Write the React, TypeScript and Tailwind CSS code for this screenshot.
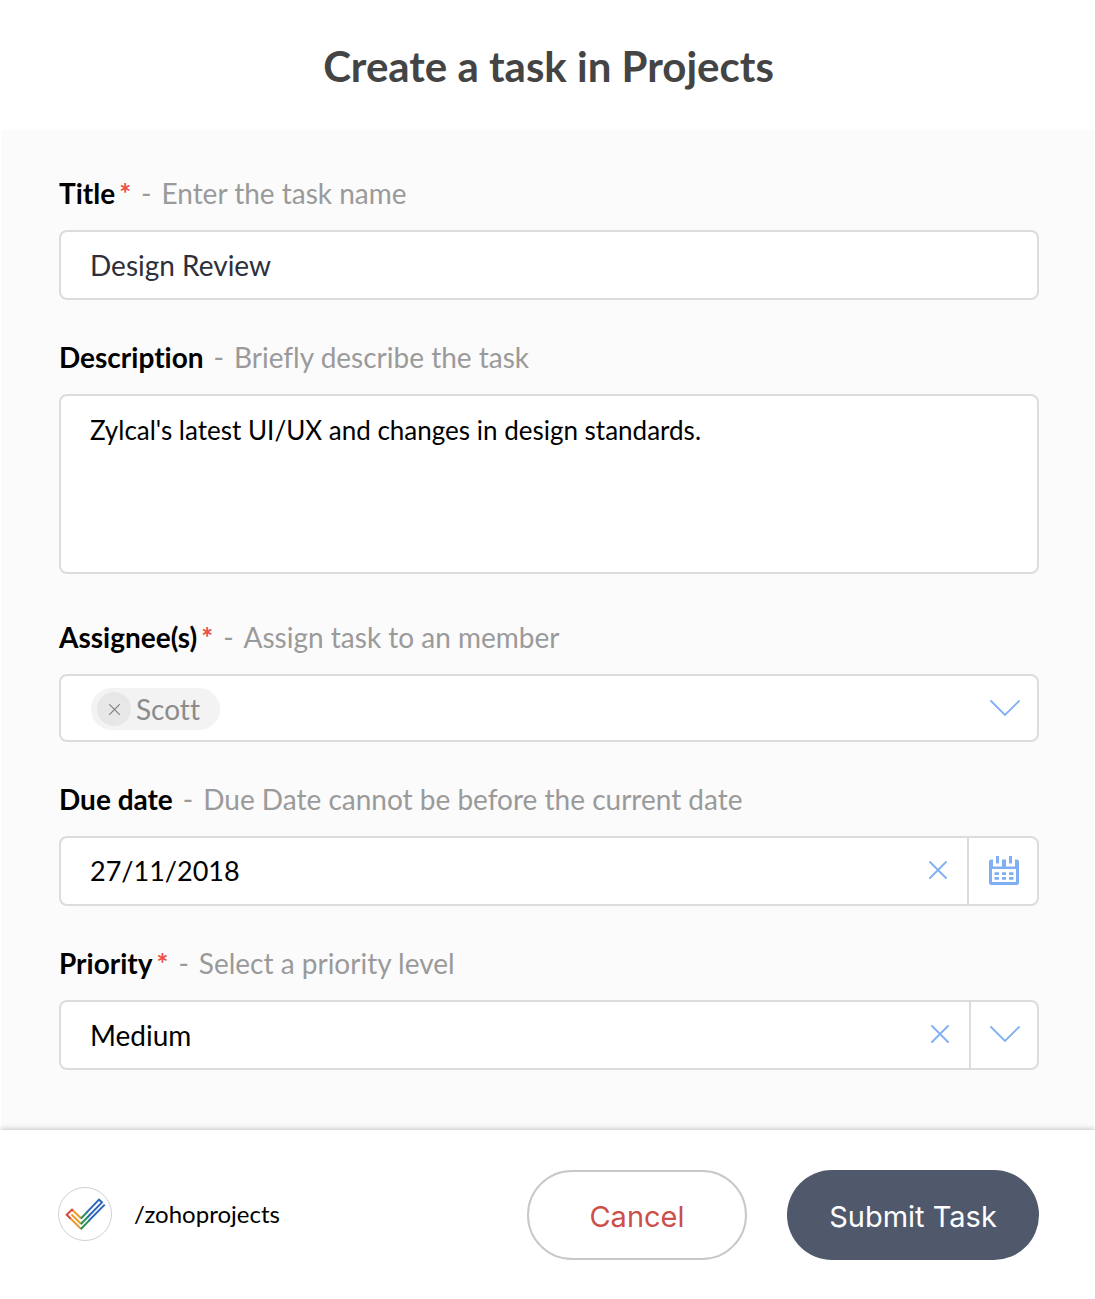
import { useState } from 'react'
import type { ReactNode } from 'react'

type FieldLabelProps = {
    htmlFor: string
    text: string
    hint: string
    required?: boolean
}

function FieldLabel({ htmlFor, text, hint, required }: FieldLabelProps) {
    return (
        <label htmlFor={htmlFor} className="block text-[28px] leading-[34px] text-[#9a9a9a]">
            <span className="font-bold text-black">{text}</span>
            {required && <span className="ml-1 font-bold text-[#ee4f45]">*</span>}
            <span className="mx-2.5">-</span>
            <span>{hint}</span>
        </label>
    )
}

function Box({ children }: { children: ReactNode }) {
    return (
        <div className="mt-5 flex h-[70px] items-stretch rounded-lg border-2 border-[#dcdcdc] bg-white">
            {children}
        </div>
    )
}

function CrossIcon({ className }: { className: string }) {
    return (
        <svg className={className} viewBox="0 0 18 18" fill="none" stroke="currentColor" strokeWidth="1.8" strokeLinecap="round">
            <path d="M1 1l16 16M17 1L1 17" />
        </svg>
    )
}

function ChevronIcon() {
    return (
        <svg className="h-4 w-[30px] text-[#80aff3]" viewBox="0 0 30 16" fill="none" stroke="currentColor" strokeWidth="1.8" strokeLinecap="round">
            <path d="M1 1l14 14L29 1" />
        </svg>
    )
}

function CalendarIcon() {
    return (
        <svg className="h-[29px] w-[30px] text-[#80aff3]" viewBox="0 0 30 29" fill="currentColor">
            <path d="M7 0h3v7.5h-3zM20 0h3v7.5h-3z" />
            <path fillRule="evenodd" d="M1.5 3.5H4V10.5H13V3.5H17V10.5H26V3.5H28.5L30 5V27.5L28.5 29H1.5L0 27.5V5zM3 13V26H27V13z" />
            <path d="M5.5 16.3h4.5v2.7h-4.5zM13 16.3h4v2.7h-4zM20 16.3h4.5v2.7h-4.5zM5.5 21h4.5v2.7h-4.5zM13 21h4v2.7h-4zM20 21h4.5v2.7h-4.5z" />
        </svg>
    )
}

function ProjectsLogo() {
    return (
        <svg className="h-[54px] w-[54px]" viewBox="0 0 54 54" fill="none" strokeWidth="2">
            <circle cx="27" cy="27" r="26.5" fill="#fff" stroke="#d0d0d0" strokeWidth="1" />
            <path d="M13 32L8.7 27.8L14 22.6L15.5 24" stroke="#d8453b" />
            <path d="M12.5 31.5L22.7 41.5M15 23.5L22.7 31M13.5 27.5L22.7 36.5" stroke="#ee9a2c" />
            <path d="M22.7 42.2L31 33.6M22.7 37.2L30 29.8M22.7 31.7L29 25.2" stroke="#2c9156" />
            <path d="M30.5 34L46.7 17.6M29.5 30.3L44 15.4L41 12.6L28.5 25.6" stroke="#2c67b8" />
        </svg>
    )
}

export default function App() {
    const [title, setTitle] = useState('Design Review')
    const [description, setDescription] = useState("Zylcal's latest UI/UX and changes in design standards.")
    const [assignees, setAssignees] = useState(['Scott'])
    const [dueDate, setDueDate] = useState('27/11/2018')
    const [priority, setPriority] = useState('Medium')

    return (
        <div className="min-h-screen bg-white font-['Lato',sans-serif] [font-variant-ligatures:no-common-ligatures]">
            <header className="flex h-[130px] items-center justify-center pt-0.5 pl-0.5">
                <h1 className="text-[42px] leading-[56px] font-bold text-[#444]">Create a task in Projects</h1>
            </header>

            <form onSubmit={(e) => e.preventDefault()}>
                <div className="mx-px flex flex-col gap-10 bg-[#fbfbfb] pt-[46px] pr-[55px] pb-[60px] pl-[58px]">
                    <div>
                        <FieldLabel htmlFor="title" text="Title" hint="Enter the task name" required />
                        <Box>
                            <input
                                id="title"
                                type="text"
                                value={title}
                                onChange={(e) => setTitle(e.target.value)}
                                className="min-w-0 flex-1 bg-transparent px-[29px] text-[28px] text-[#2d303a] outline-none"
                            />
                        </Box>
                    </div>

                    <div>
                        <FieldLabel htmlFor="description" text="Description" hint="Briefly describe the task" />
                        <textarea
                            id="description"
                            value={description}
                            onChange={(e) => setDescription(e.target.value)}
                            className="mt-5 mb-1.5 block h-[180px] w-full resize-none rounded-lg border-2 border-[#dcdcdc] bg-white px-[29px] py-4 text-[26px] leading-9 text-black outline-none"
                        />
                    </div>

                    <div>
                        <FieldLabel htmlFor="assignee" text="Assignee(s)" hint="Assign task to an member" required />
                        <div className="mt-5 flex h-[68px] items-center rounded-lg border-2 border-[#dcdcdc] bg-white pl-[30px]">
                            {assignees.map((name) => (
                                <span key={name} className="mt-0.5 flex h-[42px] items-center gap-[5px] rounded-full bg-[#f3f3f3] pr-5 pl-1.5 text-[28px] text-[#8c8c8c]">
                                    <button
                                        type="button"
                                        aria-label={`Remove ${name}`}
                                        onClick={() => setAssignees(assignees.filter((a) => a !== name))}
                                        className="flex size-[34px] items-center justify-center rounded-full bg-[#e7e7e7]"
                                    >
                                        <CrossIcon className="size-[11px] text-[#7c7c7c]" />
                                    </button>
                                    {name}
                                </span>
                            ))}
                            <button id="assignee" type="button" className="ml-auto flex w-16 items-center justify-center">
                                <ChevronIcon />
                            </button>
                        </div>
                    </div>

                    <div>
                        <FieldLabel htmlFor="due-date" text="Due date" hint="Due Date cannot be before the current date" />
                        <Box>
                            <input
                                id="due-date"
                                type="text"
                                value={dueDate}
                                onChange={(e) => setDueDate(e.target.value)}
                                className="min-w-0 flex-1 bg-transparent px-[29px] text-[27px] text-black outline-none"
                            />
                            <button type="button" aria-label="Clear due date" onClick={() => setDueDate('')} className="px-5 pb-0.5">
                                <CrossIcon className="size-[18px] text-[#80aff3]" />
                            </button>
                            <button type="button" aria-label="Open calendar" className="flex w-[70px] items-center justify-center border-l-2 border-[#dcdcdc] pb-0.5 pl-0.5">
                                <CalendarIcon />
                            </button>
                        </Box>
                    </div>

                    <div>
                        <FieldLabel htmlFor="priority" text="Priority" hint="Select a priority level" required />
                        <Box>
                            <select
                                id="priority"
                                value={priority}
                                onChange={(e) => setPriority(e.target.value)}
                                className="min-w-0 flex-1 appearance-none bg-transparent px-[29px] text-[28px] text-black outline-none"
                            >
                                <option value=""></option>
                                <option>Low</option>
                                <option>Medium</option>
                                <option>High</option>
                            </select>
                            <button type="button" aria-label="Clear priority" onClick={() => setPriority('')} className="px-5 pb-0.5">
                                <CrossIcon className="size-[18px] text-[#80aff3]" />
                            </button>
                            <button type="button" aria-label="Open priority list" className="flex w-[68px] items-center justify-center border-l-2 border-[#dcdcdc] pb-0.5 pl-0.5">
                                <ChevronIcon />
                            </button>
                        </Box>
                    </div>
                </div>

                <footer className="flex items-center bg-white pt-10 pr-14 pb-10 pl-[58px] shadow-[0_0_6px_rgba(0,0,0,0.3)]">
                    <div className="flex items-center gap-[22px] pb-0.5">
                        <ProjectsLogo />
                        <span className="text-2xl text-black">/zohoprojects</span>
                    </div>
                    <div className="ml-auto flex gap-10 font-['Inter',sans-serif] text-[29px]">
                        <button type="button" className="h-[90px] w-[220px] rounded-full border-2 border-[#c8c8c8] bg-white pt-1 text-[#cb4f4a]">
                            Cancel
                        </button>
                        <button type="submit" className="h-[90px] w-[252px] rounded-full bg-[#4f596b] pt-1 text-white">
                            Submit Task
                        </button>
                    </div>
                </footer>
            </form>
        </div>
    )
}
